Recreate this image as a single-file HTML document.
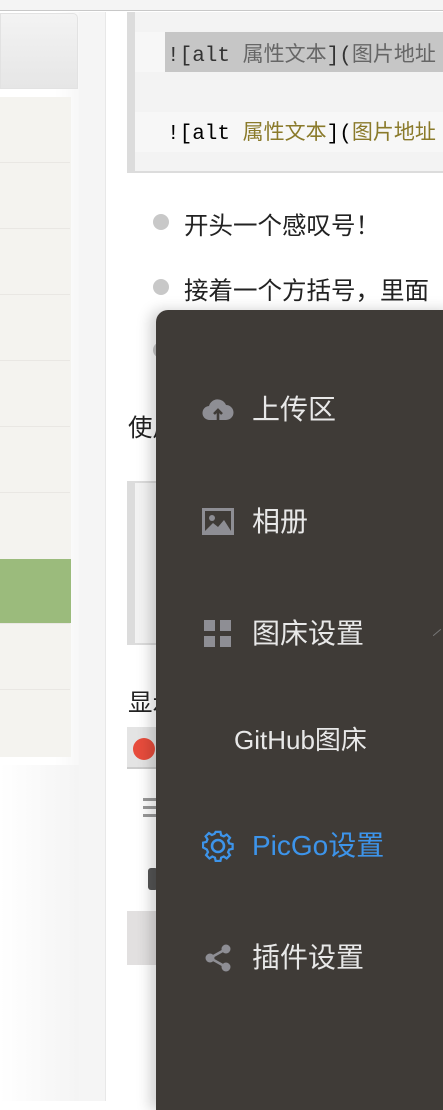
<!DOCTYPE html>
<html><head><meta charset="utf-8"><style>
*{margin:0;padding:0;box-sizing:border-box}
body{width:443px;height:1101px;overflow:hidden;background:#fff;position:relative;font-family:"Liberation Sans","Noto Sans CJK SC",sans-serif}
.a{position:absolute}
.mono{font-family:"Liberation Mono","Noto Sans CJK SC",monospace;font-size:21px}
.row{position:absolute;left:0;width:70px;height:1px;background:#e9e7e3}
.mi{position:absolute;left:252px;color:#e8e8e8;font-size:28px;line-height:30px}
.ic{position:absolute;left:202px}
</style></head><body>
<div class="a" style="left:0;top:0;width:443px;height:11px;background:#f4f4f4;border-bottom:1px solid #c8c8c8"></div>
<div class="a" style="left:0;top:12px;width:79px;height:1089px;background:linear-gradient(90deg,#fff 0,#fff 70%,#f7f7f7)"></div>
<div class="a" style="left:0;top:13px;width:78px;height:76px;background:linear-gradient(#f3f3f3,#e6e6e6);border-top-right-radius:5px;border:1px solid #e2e2e2"></div>
<div class="a" style="left:0;top:97px;width:71px;height:660px;background:#f4f3ef"></div>
<div class="row" style="top:162px"></div><div class="row" style="top:228px"></div><div class="row" style="top:294px"></div><div class="row" style="top:360px"></div><div class="row" style="top:426px"></div><div class="row" style="top:492px"></div><div class="row" style="top:623px"></div><div class="row" style="top:689px"></div>
<div class="a" style="left:0;top:559px;width:71px;height:64px;background:#9bbb7c"></div>
<div class="a" style="left:0;top:765px;width:79px;height:336px;background:linear-gradient(90deg,#fff,#f4f4f4)"></div>
<div class="a" style="left:79px;top:12px;width:27px;height:1089px;background:#f5f5f5;border-right:1px solid #e8e8e8"></div>
<div class="a" style="left:127px;top:12px;width:316px;height:161px;background:#f3f3f3;border-left:8px solid #dcdcdc;border-bottom:2px solid #dcdcdc"></div>
<div class="a" style="left:135px;top:32px;width:308px;height:40px;background:#f7f7f7"></div>
<div class="a" style="left:135px;top:112px;width:308px;height:40px;background:#f7f7f7"></div>
<div class="a" style="left:165px;top:32px;width:278px;height:40px;background:#c6c6c6"></div>
<div class="a mono" style="left:167px;top:38px;color:#333;white-space:nowrap">![alt <span style="color:#666">属性文本</span>](<span style="color:#666">图片地址</span></div>
<div class="a mono" style="left:167px;top:116px;color:#000;white-space:nowrap">![alt <span style="color:#8a7a2a">属性文本</span>](<span style="color:#8a7a2a">图片地址</span></div>
<div class="a" style="left:153px;top:214px;width:16px;height:16px;border-radius:50%;background:#c8c8c8"></div>
<div class="a" style="left:184px;top:207px;font-size:24.5px;color:#222;white-space:nowrap">开头一个感叹号！</div>
<div class="a" style="left:153px;top:279px;width:16px;height:16px;border-radius:50%;background:#c8c8c8"></div>
<div class="a" style="left:184px;top:272px;font-size:24.5px;color:#222;white-space:nowrap">接着一个方括号，里面</div>
<div class="a" style="left:153px;top:342px;width:16px;height:16px;border-radius:50%;background:#c8c8c8"></div>
<div class="a" style="left:128px;top:409px;font-size:24.5px;color:#222">使用</div>
<div class="a" style="left:127px;top:481px;width:316px;height:164px;background:#f3f3f3;border:2px solid #dcdcdc;border-left:8px solid #dcdcdc"></div>
<div class="a" style="left:128px;top:684px;font-size:24.5px;color:#222">显示</div>
<div class="a" style="left:127px;top:727px;width:316px;height:42px;background:#e4e4e4;border-bottom:2px solid #ccc"></div>
<div class="a" style="left:133px;top:738px;width:22px;height:22px;border-radius:50%;background:#e74c3c"></div>
<div class="a" style="left:143px;top:798px;width:14px;height:20px;background:repeating-linear-gradient(#999 0 3px,transparent 3px 8px)"></div>
<div class="a" style="left:148px;top:868px;width:10px;height:22px;border-radius:3px;background:#555"></div>
<div class="a" style="left:127px;top:911px;width:40px;height:54px;background:#e2e0e0"></div>
<div class="a" style="left:156px;top:310px;width:300px;height:800px;background:#3f3b37;border-top-left-radius:12px;box-shadow:-6px 0 14px rgba(0,0,0,.18)"></div>
<svg class="ic" style="top:397px" width="32" height="26" viewBox="0 0 32 26"><path d="M8 23a7 7 0 0 1-1-14A9 9 0 0 1 24 8a7.5 7.5 0 0 1 0 15z" fill="#8e8e94"/><path d="M16 23v-9M12 17l4-4 4 4" stroke="#3f3b37" stroke-width="2.6" fill="none"/></svg>
<div class="mi" style="top:395px">上传区</div>
<svg class="ic" style="top:508px" width="32" height="28" viewBox="0 0 32 28"><rect x="0" y="0" width="32" height="27" fill="#8e8e94"/><rect x="3" y="3" width="26" height="20" fill="#3f3b37"/><circle cx="10" cy="10" r="3" fill="#8e8e94"/><path d="M3 23l8-8 5 4 6-7 7 11z" fill="#8e8e94"/></svg>
<div class="mi" style="top:507px">相册</div>
<svg class="ic" style="left:204px;top:620px" width="28" height="28" viewBox="0 0 28 28"><rect x="0" y="0" width="11" height="11" fill="#8e8e94"/><rect x="16" y="0" width="11" height="11" fill="#8e8e94"/><rect x="0" y="16" width="11" height="11" fill="#8e8e94"/><rect x="16" y="16" width="11" height="11" fill="#8e8e94"/></svg>
<div class="mi" style="top:619px">图床设置</div>
<div class="a" style="left:432px;top:632px;width:10px;height:1px;background:#777;transform:rotate(-40deg)"></div>
<div class="mi" style="left:234px;top:725px;font-size:26px">GitHub图床</div>
<svg class="ic" style="top:830px" width="32" height="32" viewBox="0 0 32 32"><path d="M13.5 2h5l.8 3.6 2.8 1.2 3.1-2 3.5 3.5-2 3.1 1.2 2.8 3.6.8v5l-3.6.8-1.2 2.8 2 3.1-3.5 3.5-3.1-2-2.8 1.2-.8 3.6h-5l-.8-3.6-2.8-1.2-3.1 2-3.5-3.5 2-3.1-1.2-2.8L0 18.5v-5l3.6-.8 1.2-2.8-2-3.1 3.5-3.5 3.1 2 2.8-1.2z" transform="translate(1 0) scale(.94)" fill="none" stroke="#3d94ea" stroke-width="2.4"/><circle cx="16" cy="16" r="6" fill="none" stroke="#3d94ea" stroke-width="2.6"/></svg>
<div class="mi" style="top:831px;color:#3d94ea">PicGo设置</div>
<svg class="ic" style="left:204px;top:944px" width="28" height="28" viewBox="0 0 28 28"><path d="M22 5L6 14l16 9" stroke="#8e8e94" stroke-width="2.5" fill="none"/><circle cx="22" cy="5" r="4.5" fill="#8e8e94"/><circle cx="6" cy="14" r="4.5" fill="#8e8e94"/><circle cx="22" cy="23" r="4.5" fill="#8e8e94"/></svg>
<div class="mi" style="top:943px">插件设置</div>
</body></html>
